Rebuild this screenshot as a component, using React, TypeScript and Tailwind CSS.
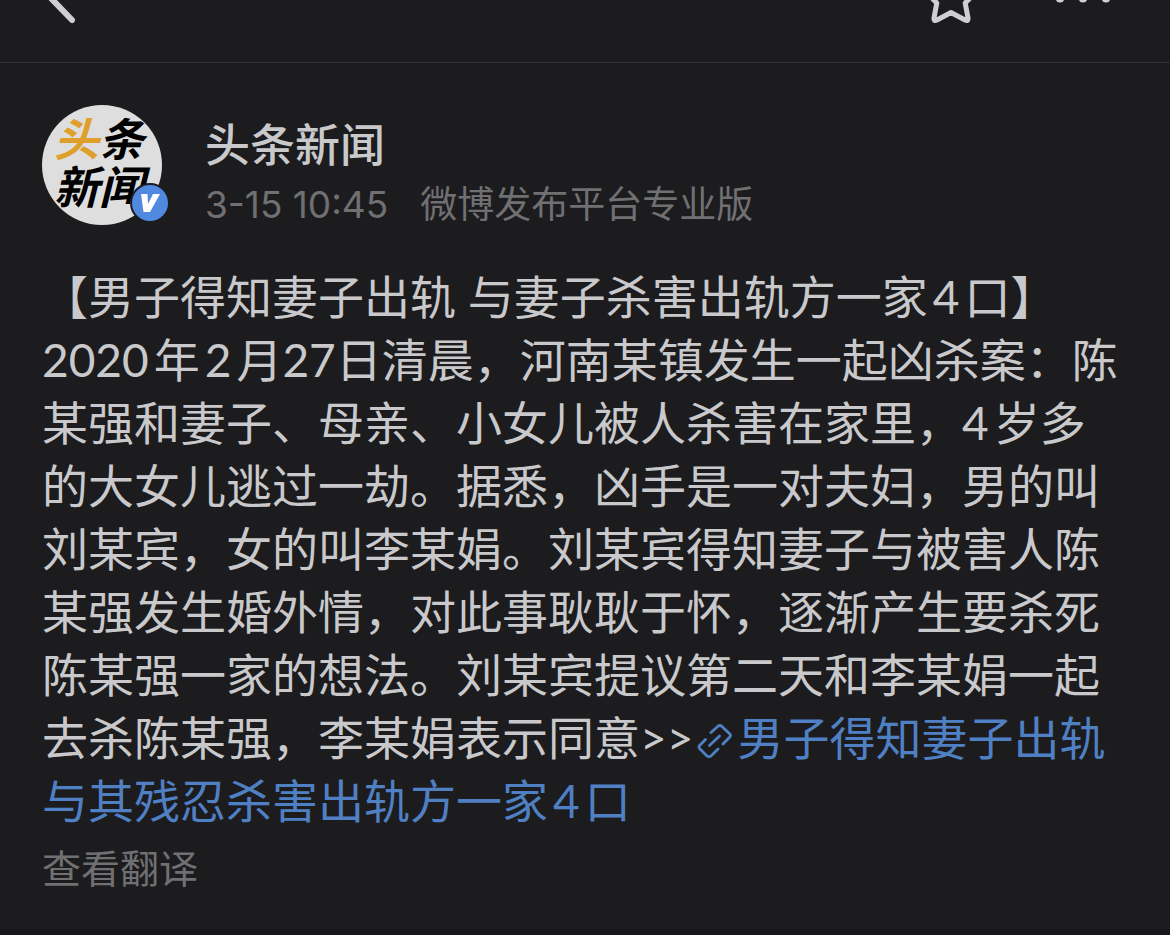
import type { ReactNode } from "react";

type Author = {
  name: string;
  time: string;
  source: string;
};

const author: Author = {
  name: "头条新闻",
  time: "3-15 10:45",
  source: "微博发布平台专业版",
};

const BackIcon = () => (
  <svg className="w-12 h-12" viewBox="0 0 48 48" fill="none" aria-hidden="true">
    <path
      d="M42 -14L14 15L42 44"
      stroke="currentColor"
      strokeWidth="6"
      strokeLinecap="round"
      strokeLinejoin="round"
    />
  </svg>
);

const StarIcon = () => (
  <svg className="w-12 h-12" viewBox="0 0 48 48" fill="none" aria-hidden="true">
    <path
      d="M24 36.5L10 44Q6.6 45.6 7 42L9.8 27L-1 16L15 13L24 -2L33 13L49 16L38.2 27L41 42Q41.4 45.6 38 44Z"
      stroke="currentColor"
      strokeWidth="5"
      strokeLinejoin="round"
    />
  </svg>
);

const MoreIcon = () => (
  <svg className="w-15 h-12" viewBox="0 0 60 48" fill="currentColor" aria-hidden="true">
    <circle cx="7" cy="22" r="4.5" />
    <circle cx="30" cy="22" r="4.5" />
    <circle cx="53" cy="22" r="4.5" />
  </svg>
);

const LinkIcon = () => (
  <svg
    className="inline-block w-9 h-9 mx-1 align-[-4px]"
    viewBox="0 0 36 36"
    fill="none"
    stroke="currentColor"
    strokeWidth="2.8"
    strokeLinecap="round"
    strokeLinejoin="round"
    aria-hidden="true"
  >
    <path d="M14 9.5L21 3.2Q23 1.6 25 3.4L32.6 10.8Q34.2 12.4 32.6 14.2L26 21" />
    <path d="M8.5 16.5L2.8 22.2Q1.2 24 2.8 25.8L10 33Q12 34.6 14 33L21 26" />
    <path d="M12.5 22.5L22.5 13" />
  </svg>
);

const Avatar = () => (
  <div className="relative shrink-0 w-30 h-30 rounded-full bg-[#dededf]">
    <div className="pt-2.5 pl-3 text-[45px] leading-[48px] font-bold italic text-black whitespace-nowrap">
      <div>
        <span className="text-[#dfa02b]">头</span>条
      </div>
      <div>新闻</div>
    </div>
    <span className="absolute -right-2 bottom-0.5 w-10 h-10 rounded-full border-2 border-[#1c1c1e] bg-[#4f8ae0] flex justify-center items-center">
      <svg className="w-5 h-5" viewBox="0 0 20 20" fill="#fff" aria-label="V">
        <path d="M1 1H7.5L8 11L13 1H20L10 19H3.5Z" />
      </svg>
    </span>
  </div>
);

// a lone digit between characters gets some air on both sides
const Digit = ({ children }: { children: ReactNode }) => (
  <span className="mx-[5px]">{children}</span>
);

const Header = () => (
  <header className="h-[63px] overflow-hidden border-b border-[#303032] pl-[30px] pr-[57px] pb-[38px] flex items-end justify-between text-[#cfcfd2]">
    <button type="button" aria-label="返回">
      <BackIcon />
    </button>
    <div className="flex items-end gap-[78px]">
      <button type="button" aria-label="收藏">
        <StarIcon />
      </button>
      <button type="button" aria-label="更多">
        <MoreIcon />
      </button>
    </div>
  </header>
);

export default function App() {
  return (
    <div className="min-h-screen flex flex-col bg-[#1c1c1e] text-[#c9c9cc] font-['Lato','Noto_Sans_CJK_SC',sans-serif]">
      <Header />
      <main className="grow px-[42px] pt-[42px]">
        <div className="flex gap-[43px]">
          <Avatar />
          <div className="pt-3">
            <h1 className="text-[45px] leading-[56px] font-medium">{author.name}</h1>
            <p className="flex gap-8 text-[37px] leading-[64px] text-[#707073] font-['Inter','Noto_Sans_CJK_SC',sans-serif] whitespace-nowrap">
              <span>{author.time}</span>
              <span>{author.source}</span>
            </p>
          </div>
        </div>
        <p className="mt-7 text-[46px] leading-[63px]">
          【男子得知妻子出轨 与妻子杀害出轨方一家<Digit>4</Digit>口】
          <br />
          2020<span className="ml-[5px]">年</span>
          <Digit>2</Digit>月27日清晨，河南某镇发生一起凶杀案：陈某强和妻子、母亲、小女儿被人杀害在家里，4<span className="ml-[5px]">岁</span>多的大女儿逃过一劫。据悉，凶手是一对夫妇，男的叫刘某宾，女的叫李某娟。刘某宾得知妻子与被害人陈某强发生婚外情，对此事耿耿于怀，逐渐产生要杀死陈某强一家的想法。刘某宾提议第二天和李某娟一起去杀陈某强，李某娟表示同意&gt;&gt;
          <a href="#" className="text-[#5080c4]">
            <LinkIcon />
            男子得知妻子出轨与其残忍杀害出轨方一家<Digit>4</Digit>口
          </a>
        </p>
        <button type="button" className="text-[39px] leading-[72px] text-[#707073]">
          查看翻译
        </button>
      </main>
      <div className="h-1.5 bg-[#18181a]" />
    </div>
  );
}
